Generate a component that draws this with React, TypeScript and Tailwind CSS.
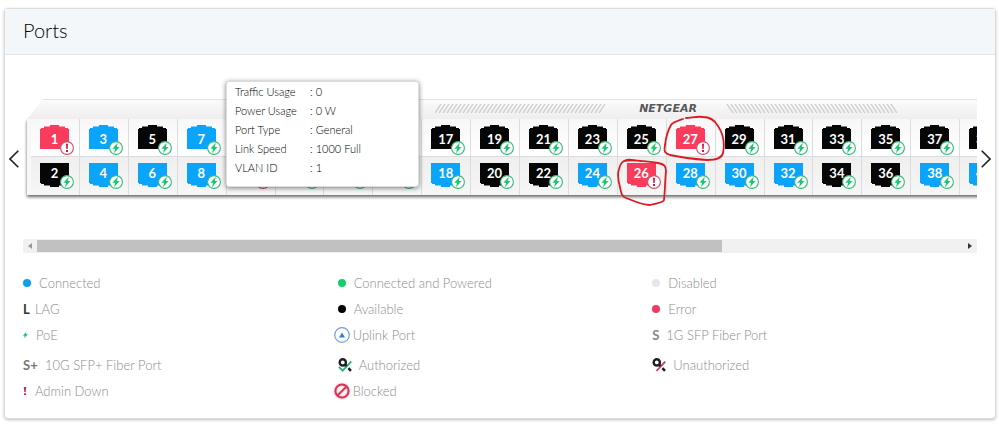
import { FC, ReactNode, useState } from "react";
import clsx from "clsx";

type Status = "connected" | "available" | "error";

interface IPort {
  id: number;
  status: Status;
}

const CONNECTED = [3, 4, 6, 7, 8, 12, 14, 16, 18, 24, 28, 30, 32, 38, 40];
const ERRORS = [1, 10, 26, 27];

const ports: IPort[] = Array.from({ length: 40 }, (_, i) => {
  const id = i + 1;
  if (ERRORS.includes(id)) return { id, status: "error" };
  return { id, status: CONNECTED.includes(id) ? "connected" : "available" };
});

const statusColor: Record<Status, string> = {
  connected: "text-[#0aa4fb]",
  available: "text-[#060606]",
  error: "text-[#fb3b5c]",
};

const portInfo = [
  ["Traffic Usage", "0"],
  ["Power Usage", "0 W"],
  ["Port Type", "General"],
  ["Link Speed", "1000 Full"],
  ["VLAN ID", "1"],
];

const BoltBadge = () => (
  <svg viewBox="0 0 14 14" className="size-[14px]">
    <circle cx="7" cy="7" r="6.4" fill="#fff" stroke="#35b878" strokeWidth="1.1" />
    <path d="M8.8 1.8 3.4 7.8h2.7L5 12.2l5.5-6.2H7.8z" fill="#12c96b" />
  </svg>
);

const ErrorBadge = () => (
  <svg viewBox="0 0 14 14" className="size-[14px]">
    <circle cx="7" cy="7" r="6.4" fill="#fff" stroke="#cf4a66" strokeWidth="1.1" />
    <path d="M6 2.8h2l-.3 5.2H6.3zM6 9h2v2H6z" fill="#d3173e" />
  </svg>
);

const Port: FC<{ port: IPort }> = ({ port }) => {
  const odd = port.id % 2 === 1;
  return (
    <button
      className={clsx(
        "flex h-[38px] items-start border-r border-[#dcdcde] pl-[9px] pt-1.5",
        odd
          ? "border-b bg-linear-to-b from-[#f8f7f8] to-white"
          : "bg-linear-to-b from-[#f0eff0] to-[#f7f6f7]"
      )}
    >
      <span className={clsx("relative block h-6 w-[29px]", statusColor[port.status])}>
        <svg
          viewBox="0 0 29 24"
          className={clsx("block h-6 w-[29px]", !odd && "rotate-180")}
        >
          <path d="M0 24V4H1V3H4V1.5H10V0H19V1.5H25V3H28V4H29V24Z" fill="currentColor" />
        </svg>
        <span
          className={clsx(
            "absolute inset-x-0 text-center text-[13px] leading-5 font-bold text-white",
            odd ? "top-1" : "top-0"
          )}
        >
          {port.id}
        </span>
        <span
          className={clsx("absolute left-5", odd ? "top-4" : "top-3")}
        >
          {port.status === "error" ? <ErrorBadge /> : <BoltBadge />}
        </span>
      </span>
    </button>
  );
};

const Hatch: FC<{ flip?: boolean }> = ({ flip }) => (
  <svg
    viewBox="0 0 173 9"
    className={clsx("h-[9px] w-[173px]", flip && "-scale-x-100")}
    stroke="#c9c7c8"
    strokeWidth="1.2"
  >
    {Array.from({ length: 42 }, (_, i) => (
      <path key={i} d={`M${i * 4} 9l6-9`} />
    ))}
  </svg>
);

const Chevron: FC<{ label: string; flip?: boolean }> = ({ label, flip }) => (
  <button
    aria-label={label}
    className="flex w-[18px] shrink-0 items-center justify-center"
  >
    <svg
      viewBox="0 0 10 18"
      className={clsx("h-[18px] w-[10px]", flip && "rotate-180")}
      fill="none"
      stroke="#222"
      strokeWidth="1.6"
    >
      <path d="M9.3.7 1 9l8.3 8.3" />
    </svg>
  </button>
);

const Dot: FC<{ className: string }> = ({ className }) => (
  <span className={clsx("mr-2 size-2 rounded-full", className)} />
);

const KeyIcon: FC<{ allowed?: boolean }> = ({ allowed }) => (
  <svg viewBox="0 0 14 14" className="mr-[7px] size-[14px]" fill="none">
    {allowed ? (
      <path d="M1 8.8l3.6 3.8L13.4 3.4" stroke="#1fba6c" strokeWidth="1.8" />
    ) : (
      <path d="M4.4 13L13.2 3.6" stroke="#d8375a" strokeWidth="1.8" />
    )}
    <circle cx="4.8" cy="4.4" r="3.1" stroke="#1d1f24" strokeWidth="2.4" />
    <path d="M7 6.6l1.6 1.6M10.4 10.2l2.6 2.6" stroke="#1d1f24" strokeWidth="2.6" />
  </svg>
);

const legend: { icon: ReactNode; label: string }[][] = [
  [
    { icon: <Dot className="bg-[#0c9ff5]" />, label: "Connected" },
    { icon: <Dot className="bg-[#13d069]" />, label: "Connected and Powered" },
    { icon: <Dot className="bg-[#e6e6ef]" />, label: "Disabled" },
  ],
  [
    { icon: <span className="w-3 font-bold text-[#333]">L</span>, label: "LAG" },
    { icon: <Dot className="bg-black" />, label: "Available" },
    { icon: <Dot className="bg-[#ee3b60]" />, label: "Error" },
  ],
  [
    {
      icon: (
        <svg viewBox="0 0 6 8" className="mr-2 h-2 w-[5px]">
          <path d="M3.8 0 0 4.8h2L1.6 8 6 3.2H3.8z" fill="#2fbd78" />
        </svg>
      ),
      label: "PoE",
    },
    {
      icon: (
        <svg viewBox="0 0 16 16" className="-ml-1 mr-[3px] size-4">
          <circle cx="8" cy="8" r="7.3" fill="#fff" stroke="#6c9fdc" strokeWidth="1.2" />
          <path d="M8 5.6l3 4.8H5z" fill="#2b7fd8" />
        </svg>
      ),
      label: "Uplink Port",
    },
    {
      icon: <span className="w-[14px] font-bold text-[#888]">S</span>,
      label: "1G SFP Fiber Port",
    },
  ],
  [
    {
      icon: <span className="w-[22px] font-bold text-[#777]">S+</span>,
      label: "10G SFP+ Fiber Port",
    },
    { icon: <KeyIcon allowed />, label: "Authorized" },
    { icon: <KeyIcon />, label: "Unauthorized" },
  ],
  [
    {
      icon: (
        <svg viewBox="0 0 4 8" className="mr-2 h-2 w-1">
          <path d="M.8 0h2.4l-.5 5H1.3zM1 6.2h2V8H1z" fill="#d8264c" />
        </svg>
      ),
      label: "Admin Down",
    },
    {
      icon: (
        <svg
          viewBox="0 0 16 16"
          className="-ml-1 mr-[3px] size-4 drop-shadow-[0_0_1px_#f5a3b3]"
          fill="none"
          stroke="#e0304f"
          strokeWidth="2"
        >
          <circle cx="8" cy="8" r="6.6" />
          <path d="M12.6 3.4l-9.2 9.2" />
        </svg>
      ),
      label: "Blocked",
    },
  ],
];

const Tooltip = () => (
  <dl className="absolute left-[203px] top-0.5 z-10 h-[106px] w-[193px] rounded-[3px] border border-[#ddd] bg-white px-2 text-[11px] leading-[19px] font-light text-black shadow-[0_1px_5px_rgba(0,0,0,0.5)]">
    {portInfo.map(([name, value]) => (
      <div key={name} className="flex">
        <dt className="w-[75px]">{name}</dt>
        <dd>: {value}</dd>
      </div>
    ))}
  </dl>
);

// hand drawn rings round the two failing ports
const Marks = () => (
  <svg
    viewBox="0 0 108 92"
    className="pointer-events-none absolute left-[594px] top-9 h-[92px] w-[108px]"
    fill="none"
    stroke="#dc1a22"
    strokeWidth="1.8"
    strokeLinecap="round"
  >
    <path d="M66 4C60 6 56 7 54 10C50 17 49 21 48 30C47 36 47 38 53 40C62 42 76 44 90 45C99 45 105 43 106 38C108 28 107 20 101 11C97 4 92 2 86 2C80 1 74 3 69 3" />
    <path d="M7 46C16 44 29 46 41 48C47 49 49 51 49 56C48 66 48 76 47 85C46 88 40 88 33 90C24 90 15 85 9 83C4 81 4 77 3 72C1 65 0 60 2 54C3 50 5 46 9 45C13 44 20 46 24 46" />
  </svg>
);

export default function App() {
  const [open] = useState(true);
  const top = ports.filter((p) => p.id % 2 === 1);
  const bottom = ports.filter((p) => p.id % 2 === 0);

  return (
    <div className="bg-white px-1 pb-2 pt-2 font-['Lato',sans-serif]">
      <section className="mr-[-1px] rounded border border-[#dcdcdc] bg-white pb-3.5 shadow-[0_1px_3px_rgba(0,0,0,0.25)]">
        <header className="flex h-[46px] items-center border-b border-[#dfe6ea] bg-[#f3f7f9] px-[18px] pb-1">
          <h1 className="text-[20px] leading-7 font-light text-black">Ports</h1>
        </header>

        <div className="flex pt-6">
          <Chevron label="Previous ports" />
          <div className="relative min-w-0 flex-1">
            <div className="overflow-hidden pb-11 pt-5">
              <div className="ml-1 w-[982px]">
                <div className="flex h-5 items-center border-t border-[#e4e2e3] bg-linear-to-b from-[#fcfbfc] to-[#efedee] pb-0.5 pl-[408px] [clip-path:polygon(16px_0,100%_0,100%_100%,0_100%)]">
                  <Hatch />
                  <span className="w-[116px] pl-1 text-center font-['DejaVu_Sans',sans-serif] text-[11px] leading-4 font-bold text-[#58585a] italic">
                    NETGEAR
                  </span>
                  <Hatch flip />
                </div>
                <div className="grid grid-cols-20 bg-[#f8f7f8] pl-1 shadow-[0_2px_3px_rgba(0,0,0,0.6)]">
                  {[...top, ...bottom].map((port) => (
                    <Port key={port.id} port={port} />
                  ))}
                </div>
              </div>
            </div>
            {open && <Tooltip />}
            <Marks />
          </div>
          <Chevron label="Next ports" flip />
        </div>

        <div className="mx-[18px] flex h-[14px] items-center bg-[#f1f1f1]">
          <button aria-label="Scroll left" className="flex w-[14px] justify-center">
            <svg viewBox="0 0 4 6" className="h-1.5 w-1">
              <path d="M4 0v6L0 3z" fill="#999" />
            </svg>
          </button>
          <div className="flex-1">
            <div className="h-3 w-[74%] bg-[#c1c1c1]" />
          </div>
          <button aria-label="Scroll right" className="flex w-[14px] justify-center">
            <svg viewBox="0 0 4 6" className="h-1.5 w-1">
              <path d="M0 0v6l4-3z" fill="#333" />
            </svg>
          </button>
        </div>

        <div className="mt-[17px] pl-[18px] pr-7 text-[13px] leading-[26px] font-light text-[#8c8c8c]">
          {legend.map((row, i) => (
            <ul key={i} className={clsx("grid grid-cols-3", i === 3 && "mt-1")}>
              {row.map(({ icon, label }) => (
                <li key={label} className="flex h-[26px] items-center">
                  {icon}
                  <span>{label}</span>
                </li>
              ))}
            </ul>
          ))}
        </div>
      </section>
    </div>
  );
}
